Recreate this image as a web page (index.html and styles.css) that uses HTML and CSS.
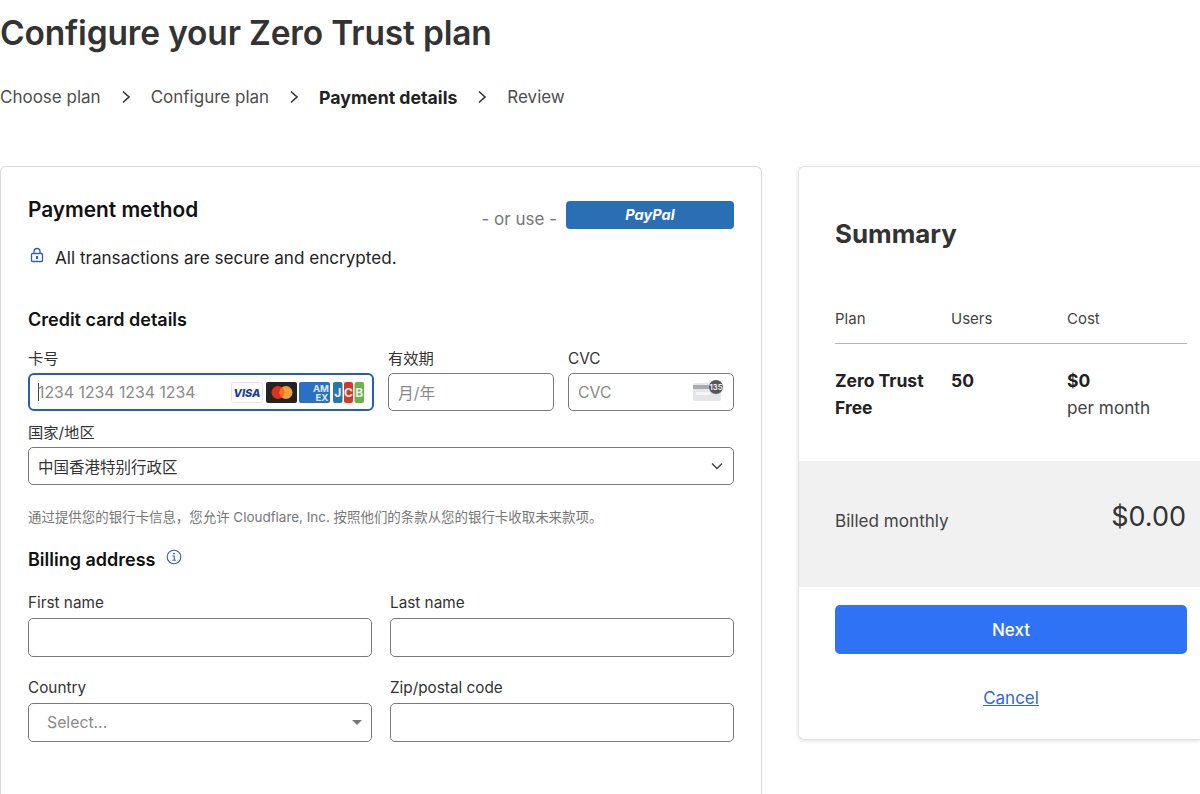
FILE: index.html
```html
<!DOCTYPE html>
<html lang="en">
<head>
    <meta charset="utf-8">
    <title>Configure your Zero Trust plan</title>
    <link rel="stylesheet" href="styles.css">
</head>
<body>
    <h1>Configure your Zero Trust plan</h1>

    <div class="steps">
        <span>Choose plan</span>
        <svg class="chevron" viewBox="0 0 10 14"><path d="M2 1.5 8 7l-6 5.5"/></svg>
        <span>Configure plan</span>
        <svg class="chevron" viewBox="0 0 10 14"><path d="M2 1.5 8 7l-6 5.5"/></svg>
        <span class="current">Payment details</span>
        <svg class="chevron" viewBox="0 0 10 14"><path d="M2 1.5 8 7l-6 5.5"/></svg>
        <span>Review</span>
    </div>

    <div class="columns">
        <div class="card payment">
            <div class="payment-top">
                <h2>Payment method</h2>
                <div class="alt-pay">
                    <span class="or-use">- or use -</span>
                    <button class="paypal">PayPal</button>
                </div>
            </div>
            <div class="secure">
                <svg class="lock" viewBox="0 0 14 16"><path class="lock-line" d="M4 7V4.5a3 3 0 0 1 6 0V7"/><rect class="lock-line" x="1.5" y="6.5" width="11" height="8" rx="1"/><rect class="lock-dot" x="6" y="9" width="2" height="3"/></svg>
                <span>All transactions are secure and encrypted.</span>
            </div>

            <h3 class="card-title">Credit card details</h3>
            <div class="card-row">
                <div class="field">
                    <label>卡号</label>
                    <div class="input focused">
                        <span class="caret"></span>
                        <span class="placeholder">1234 1234 1234 1234</span>
                        <div class="brands">
                            <svg width="32" height="21" viewBox="0 0 32 21"><rect x=".5" y=".5" width="31" height="20" rx="2" fill="#fff" stroke="#e3e5ea"/><text x="16" y="15" class="visa-text" text-anchor="middle">VISA</text></svg>
                            <svg width="31" height="21" viewBox="0 0 31 21"><rect width="31" height="21" rx="2" fill="#232323"/><circle cx="12" cy="10.5" r="6.5" fill="#e0301e"/><circle cx="20" cy="10.5" r="6.5" fill="#f0a03c"/><path d="M16 5.4a6.5 6.5 0 0 1 0 10.2 6.5 6.5 0 0 1 0-10.2z" fill="#f0701e"/></svg>
                            <svg width="31" height="21" viewBox="0 0 31 21"><rect width="31" height="21" rx="2" fill="#2a70c4"/><text x="22" y="10" class="amex-text" text-anchor="middle">AM</text><text x="23" y="19" class="amex-text" text-anchor="middle">EX</text></svg>
                            <svg width="31" height="21" viewBox="0 0 31 21"><rect width="9.5" height="21" rx="2" fill="#2a76a8"/><rect x="11" width="9" height="21" rx="2" fill="#cf3a2a"/><rect x="21.5" width="9.5" height="21" rx="2" fill="#6eb04a"/><text x="4.7" y="15" class="jcb-text" text-anchor="middle">J</text><text x="15.5" y="15" class="jcb-text" text-anchor="middle">C</text><text x="26.2" y="15" class="jcb-text" text-anchor="middle">B</text></svg>
                        </div>
                    </div>
                </div>
                <div class="field">
                    <label>有效期</label>
                    <div class="input"><span class="placeholder">月/年</span></div>
                </div>
                <div class="field">
                    <label>CVC</label>
                    <div class="input">
                        <span class="placeholder">CVC</span>
                        <svg class="cvc-icon" width="30" height="22" viewBox="0 0 30 22"><rect y="3" width="28" height="18" rx="2" fill="#e4e5e7"/><rect y="5" width="28" height="4" fill="#a9abaf"/><rect x="3" y="12" width="14" height="3" fill="#f6f6f6"/><circle cx="23" cy="7" r="7" fill="#55565c"/><text x="23" y="9.5" class="cvc-text" text-anchor="middle">135</text></svg>
                    </div>
                </div>
            </div>
            <div class="field region">
                <label>国家/地区</label>
                <div class="input">
                    <span class="value">中国香港特别行政区</span>
                    <svg class="select-chevron" viewBox="0 0 12 8"><path d="M1 1.5 6 6.500l5-5"/></svg>
                </div>
            </div>
            <p class="mandate">通过提供您的银行卡信息，您允许 Cloudflare, Inc. 按照他们的条款从您的银行卡收取未来款项。</p>

            <div class="billing-title">
                <h3>Billing address</h3>
                <svg class="info" viewBox="0 0 16 16"><circle cx="8" cy="8" r="6.8"/><path d="M6.500 7h1.800v4.300M6.300 11.300h3.600"/><circle class="info-dot" cx="8" cy="4.600" r=".9"/></svg>
            </div>
            <div class="billing-grid">
                <div class="field">
                    <label>First name</label>
                    <div class="input"></div>
                </div>
                <div class="field">
                    <label>Last name</label>
                    <div class="input"></div>
                </div>
                <div class="field">
                    <label>Country</label>
                    <div class="input select">
                        <span class="placeholder">Select...</span>
                        <span class="select-arrow"></span>
                    </div>
                </div>
                <div class="field">
                    <label>Zip/postal code</label>
                    <div class="input"></div>
                </div>
            </div>
        </div>

        <div class="card summary">
            <h2 class="summary-title">Summary</h2>
            <div class="plan-table plan-head">
                <span>Plan</span>
                <span>Users</span>
                <span>Cost</span>
            </div>
            <div class="plan-table plan-row">
                <strong>Zero Trust Free</strong>
                <strong>50</strong>
                <div><strong>$0</strong><br>per month</div>
            </div>
            <div class="billed">
                <span>Billed monthly</span>
                <span class="total">$0.00</span>
            </div>
            <div class="actions">
                <button class="next">Next</button>
                <a class="cancel" href="#">Cancel</a>
            </div>
        </div>
    </div>
</body>
</html>
```

FILE: styles.css
```css
html, body {
    height: 794px;
    overflow: hidden;
}
body {
    margin: 0;
    background: #fff;
    color: #333;
    font-family: Inter, "Noto Sans CJK SC", sans-serif;
    font-size: 16px;
}
h1 {
    margin: 11px 0 0;
    font-size: 33.500px;
    line-height: 44px;
    font-weight: 600;
    letter-spacing: -0.17px;
}
.steps {
    display: flex;
    align-items: center;
    gap: 20px;
    height: 24px;
    margin-top: 30px;
    font-size: 17px;
    color: #4d4d4d;
}
.steps .current {
    font-size: 17.700px;
    font-weight: 700;
    color: #222;
}
.chevron {
    width: 10px;
    height: 14px;
    fill: none;
    stroke: #333;
    stroke-width: 1.6;
}
.columns {
    display: flex;
    gap: 36px;
    height: 628px;
    margin-top: 57px;
}
.card {
    box-sizing: border-box;
    background: #fff;
    border: 1px solid #d9d9d9;
    border-radius: 6px;
}
.payment {
    flex: none;
    width: 762px;
    height: 628px;
    padding: 28px 27px 0;
    border-bottom: none;
    border-radius: 6px 6px 0 0;
}
.payment-top {
    display: flex;
    justify-content: space-between;
    align-items: flex-start;
    height: 34px;
}
h2 {
    margin: 0;
    font-size: 20.800px;
    line-height: 30px;
    font-weight: 600;
    color: #111;
}
.alt-pay {
    display: flex;
    align-items: flex-start;
    gap: 9px;
    margin-top: 6px;
}
.or-use {
    margin-top: 8px;
    font-size: 17px;
    line-height: 20px;
    color: #777;
}
.paypal {
    width: 168px;
    height: 28px;
    padding: 0 0 2px;
    background: #2a6eb4;
    color: #fff;
    border: none;
    border-radius: 4px;
    font-family: Inter, sans-serif;
    font-size: 14.500px;
    font-weight: 700;
    font-style: italic;
}
.secure {
    display: flex;
    align-items: center;
    gap: 11px;
    margin-top: 16px;
    height: 24px;
    font-size: 17.100px;
    color: #222;
}
.lock {
    width: 14px;
    height: 16px;
    margin: -5px 0 0 2px;
}
.lock-line {
    fill: none;
    stroke: #2f5fae;
    stroke-width: 1.300;
}
.lock-dot {
    fill: #2f5fae;
}
h3 {
    margin: 0;
    font-size: 18px;
    line-height: 24px;
    font-weight: 600;
    color: #111;
}
.card-title {
    margin-top: 39px;
}
.card-row {
    display: grid;
    grid-template-columns: 346px 166px 166px;
    gap: 14px;
    margin-top: 17px;
}
.field label {
    display: block;
    height: 20px;
    margin-bottom: 4px;
    font-size: 15.300px;
    line-height: 20px;
    color: #333;
}
.input {
    box-sizing: border-box;
    display: flex;
    align-items: center;
    position: relative;
    height: 38px;
    padding: 0 10px 0 9px;
    border: 1px solid #7a7a7a;
    border-radius: 5px;
    background: #fff;
    font-size: 15.800px;
}
.input.focused {
    border: 2px solid #2560b0;
    border-radius: 6px;
    padding: 0 8px;
}
.placeholder {
    color: #8a8a8a;
}
.value {
    font-size: 15.500px;
    color: #333;
}
.caret {
    width: 1px;
    height: 18px;
    background: #444;
    margin-right: -1px;
}
.brands {
    display: flex;
    align-items: center;
    gap: 2px;
    margin-left: auto;
}
.brands svg:nth-child(1),
.brands svg:nth-child(3) {
    margin-right: 1px;
}
.visa-text {
    font: italic 800 11px Inter, sans-serif;
    fill: #1f3a93;
}
.amex-text {
    font: 700 9.500px Inter, sans-serif;
    fill: #dfeaf8;
}
.jcb-text {
    font: 700 12px Inter, sans-serif;
    fill: #e8f0e8;
}
.cvc-icon {
    margin-left: auto;
    margin-bottom: 2px;
}
.cvc-text {
    font: 700 7.500px Inter, sans-serif;
    fill: #eee;
}
.region {
    margin-top: 12px;
}
.select-chevron {
    width: 12px;
    height: 8px;
    margin-left: auto;
    fill: none;
    stroke: #444;
    stroke-width: 1.400;
}
.mandate {
    margin: 23px 0 0;
    font-size: 13.450px;
    line-height: 18px;
    color: #777;
}
.billing-title {
    display: flex;
    gap: 10px;
    margin-top: 22px;
}
.info {
    width: 16px;
    height: 16px;
    margin-top: 1px;
    fill: none;
    stroke: #2f5fae;
    stroke-width: 1.100;
}
.info-dot {
    fill: #2f5fae;
    stroke: none;
}
.billing-grid {
    display: grid;
    grid-template-columns: 344px 344px;
    column-gap: 18px;
    row-gap: 21px;
    margin-top: 21px;
}
.billing-grid label {
    margin-bottom: 5px;
}
.billing-grid .input {
    height: 39px;
}
.billing-grid .select {
    padding: 0 9px 0 18px;
}
.select-arrow {
    width: 0;
    height: 0;
    margin-left: auto;
    border-left: 5.500px solid transparent;
    border-right: 5.500px solid transparent;
    border-top: 5.500px solid #777;
}
.summary {
    flex: 1;
    height: 574px;
    padding-top: 50px;
    border-color: #e2e2e2;
    border-right: none;
    border-radius: 6px 0 0 6px;
    box-shadow: 0 1px 4px rgba(0, 0, 0, 0.12);
}
.summary-title {
    margin-left: 36px;
    font-size: 25.900px;
    line-height: 34px;
    font-weight: 700;
    color: #333;
}
.plan-table {
    display: grid;
    grid-template-columns: 116px 116px 120px;
    width: 352px;
    margin-left: 36px;
}
.plan-head {
    margin-top: 58px;
    padding-bottom: 14px;
    border-bottom: 1px solid #b5b5b5;
    font-size: 15px;
    line-height: 20px;
    color: #444;
}
.plan-row {
    padding-top: 23px;
    height: 117px;
    box-sizing: border-box;
    font-size: 17.200px;
    line-height: 27px;
    color: #444;
}
.plan-row strong {
    font-size: 17.500px;
    font-weight: 700;
    color: #222;
}
.plan-row strong:first-child {
    padding-right: 20px;
}
.billed {
    display: flex;
    justify-content: space-between;
    align-items: center;
    box-sizing: border-box;
    height: 126px;
    padding: 0 14px 8px 36px;
    background: #f1f1f1;
    font-size: 17.100px;
    color: #444;
}
.total {
    margin-top: -8px;
    font-size: 27px;
    font-weight: 400;
    color: #333;
}
.actions {
    display: flex;
    flex-direction: column;
    align-items: center;
    width: 352px;
    margin: 18px 0 0 36px;
}
.next {
    width: 100%;
    height: 49px;
    background: #2f72f5;
    color: #fff;
    border: none;
    border-radius: 5px;
    font-family: Inter, sans-serif;
    font-size: 17px;
    font-weight: 500;
}
.cancel {
    margin-top: 34px;
    font-size: 17px;
    color: #2f66d8;
}
```
